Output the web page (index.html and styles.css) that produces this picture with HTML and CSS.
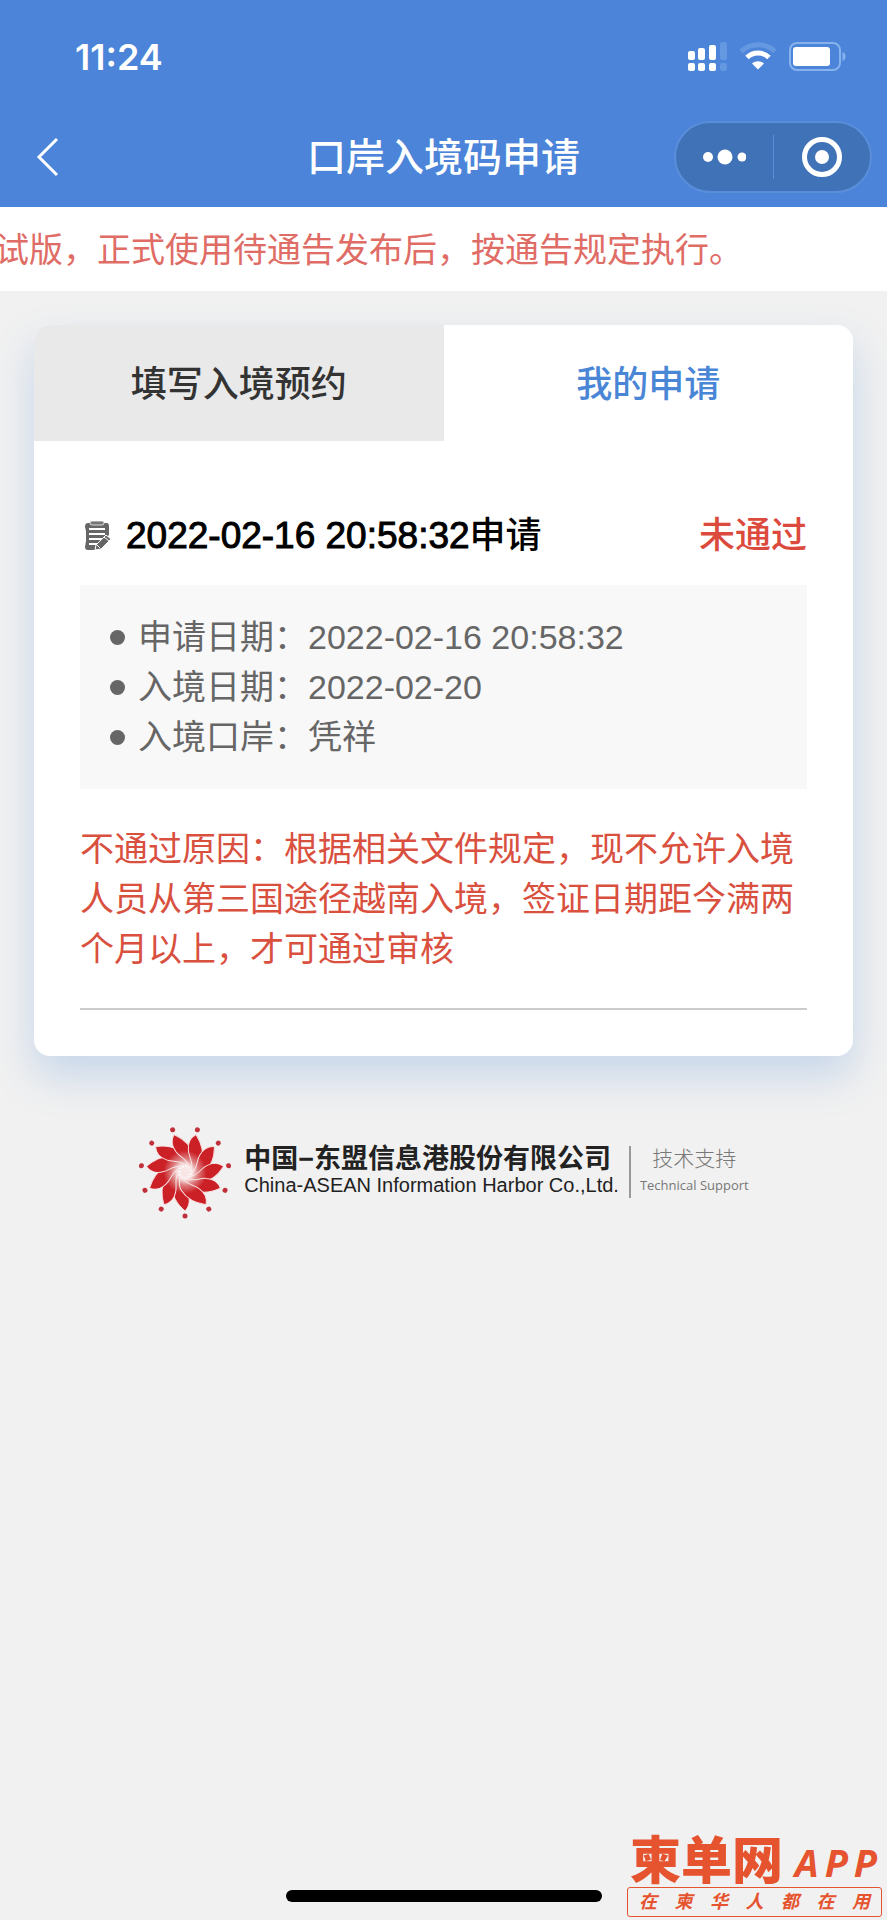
FILE: index.html
```html
<!DOCTYPE html>
<html lang="zh-CN">
<head>
    <meta charset="UTF-8">
    <meta name="viewport" content="width=device-width, initial-scale=1.0">
    <title>口岸入境码申请</title>
    <link rel="stylesheet" href="styles.css">
</head>
<body>

    <header class="header">
        <!-- Status Bar -->
        <div class="status-bar">
            <span class="time">11:24</span>
            <div class="status-icons">
                <svg width="39" height="30" viewBox="0 0 39 30" fill="#fff">
                    <rect x="0" y="9" width="7" height="9" rx="2"/>
                    <rect x="10" y="6" width="7" height="12" rx="2"/>
                    <rect x="21" y="3" width="7" height="15" rx="2"/>
                    <rect x="0" y="21" width="7" height="8" rx="2"/>
                    <rect x="10" y="21" width="7" height="8" rx="2"/>
                    <rect x="21" y="21" width="7" height="8" rx="2"/>
                    <g fill="#6499e2">
                        <rect x="32" y="0" width="7" height="18" rx="2"/>
                        <rect x="32" y="21" width="7" height="8" rx="2"/>
                    </g>
                </svg>
                <svg width="38" height="30" viewBox="0 0 38 30" fill="none">
                    <path d="M2 9.500C11.500 .5 26.500 .5 36 9.500" stroke="#6499e2" stroke-width="5"/>
                    <path d="M8 15.500C14 9.500 24 9.500 30 15.500" stroke="#fff" stroke-width="5"/>
                    <path d="M13 21.500C16.500 18.500 21.500 18.500 25 21.500L19 27.500Z" fill="#fff"/>
                </svg>
                <svg width="58" height="30" viewBox="0 0 58 30">
                    <rect x="1" y="1" width="50" height="27" rx="7" fill="none" stroke="#86b2ee" stroke-width="2"/>
                    <rect x="4" y="5" width="37" height="19" rx="3" fill="#fff"/>
                    <path d="M53.500 10C57.500 11.500 57.500 17.500 53.500 19Z" fill="#86b2ee"/>
                </svg>
            </div>
        </div>

        <!-- Navigation Bar -->
        <div class="nav-bar">
            <button type="button" class="back" aria-label="返回">
                <svg width="24" height="40" viewBox="0 0 24 40" fill="none" stroke="#fff" stroke-width="3">
                    <path d="M21 2L3 20L21 38"/>
                </svg>
            </button>
            <h1>口岸入境码申请</h1>
            <div class="capsule">
                <button type="button" aria-label="更多">
                    <svg width="44" height="16" viewBox="0 0 44 16" fill="#fff">
                        <circle cx="6" cy="8" r="5"/>
                        <circle cx="23" cy="8" r="7.500"/>
                        <circle cx="40" cy="8" r="4.500"/>
                    </svg>
                </button>
                <button type="button" aria-label="关闭">
                    <svg width="40" height="40" viewBox="0 0 40 40">
                        <circle cx="20" cy="20" r="17.500" fill="none" stroke="#fff" stroke-width="5"/>
                        <circle cx="20" cy="20" r="7" fill="#fff"/>
                    </svg>
                </button>
            </div>
        </div>
    </header>

    <div class="notice">
        <p>试版，正式使用待通告发布后，按通告规定执行。</p>
    </div>

    <main class="card">
        <nav class="tabs">
            <button type="button" class="tab">填写入境预约</button>
            <button type="button" class="tab active">我的申请</button>
        </nav>

        <section class="record">
            <div class="record-header">
                <svg width="28" height="30" viewBox="0 0 28 30">
                    <path d="M4 2H22C25 2 25 4 25 6V14L14 25L12 29H4C2 29 1 28 1 26L2 20V10L1 6C1 3 2 2 4 2Z" fill="#666"/>
                    <rect x="6" y="0" width="14" height="4" rx="2" fill="#777" stroke="#ddd"/>
                    <path d="M5 8H21M5 13H21M5 18H18M5 23H14" stroke="#fff" stroke-width="2"/>
                    <path d="M11 29L12 24L22 14L27 18L17 28Z" fill="#666" stroke="#fff"/>
                    <path d="M20 16L25 20M13 24L16 27" stroke="#fff"/>
                </svg>
                <h2><span class="stamp">2022-02-16 20:58:32</span>申请</h2>
                <span class="result">未通过</span>
            </div>

            <ul class="info">
                <li>申请日期：2022-02-16 20:58:32</li>
                <li>入境日期：2022-02-20</li>
                <li>入境口岸：凭祥</li>
            </ul>

            <p class="reason">不通过原因：根据相关文件规定，现不允许入境人员从第三国途径越南入境，签证日期距今满两个月以上，才可通过审核</p>
        </section>
    </main>

    <footer class="footer">
        <svg class="logo" width="94" height="94" viewBox="-47 -47 94 94">
            <defs>
                <radialGradient id="petalFill" gradientUnits="userSpaceOnUse" cx="0" cy="0" r="24">
                    <stop offset="0.25" stop-color="#fff"/>
                    <stop offset="0.55" stop-color="#dd7f80"/>
                    <stop offset="0.9" stop-color="#cb2026"/>
                </radialGradient>
                <g id="petal">
                    <path d="M0 0C-8 1-13 7-13 14C-13 24-8 32 0 39C5 34 5 27 3 22C1 16-5 12-5 6C-5 3-3 1 0 0Z" fill="url(#petalFill)" stroke="#f8e4e4" stroke-width="1"/>
                    <circle cx="0" cy="44" r="2.500" fill="#c0303a"/>
                </g>
            </defs>
            <use href="#petal"/>
            <use href="#petal" transform="rotate(32.727)"/>
            <use href="#petal" transform="rotate(65.455)"/>
            <use href="#petal" transform="rotate(98.182)"/>
            <use href="#petal" transform="rotate(130.909)"/>
            <use href="#petal" transform="rotate(163.636)"/>
            <use href="#petal" transform="rotate(196.364)"/>
            <use href="#petal" transform="rotate(229.091)"/>
            <use href="#petal" transform="rotate(261.818)"/>
            <use href="#petal" transform="rotate(294.545)"/>
            <use href="#petal" transform="rotate(327.273)"/>
        </svg>
        <div class="company">
            <strong>中国−东盟信息港股份有限公司</strong>
            <span>China-ASEAN Information Harbor Co.,Ltd.</span>
        </div>
        <div class="support">
            <span>技术支持</span>
            <small>Technical Support</small>
        </div>
    </footer>

    <div class="home-indicator"></div>

    <!-- Watermark over the bottom right corner -->
    <div class="watermark">
        <div class="brand">
            <b>柬单网</b>
            <i><span>A</span><span>P</span><span>P</span></i>
        </div>
        <div class="slogan">
            <span>在</span><span>柬</span><span>华</span><span>人</span><span>都</span><span>在</span><span>用</span>
        </div>
    </div>

</body>
</html>
```
FILE: styles.css
```css
* {
    box-sizing: border-box;
}

body {
    margin: 0;
    min-height: 100vh;
    display: flex;
    flex-direction: column;
    background-color: #f1f1f1;
    font-family: "Liberation Sans", "Noto Sans CJK SC", sans-serif;
    font-size: 34px;
    line-height: 50px;
    color: #000;
}

h1, h2, p, ul {
    margin: 0;
    padding: 0;
}

button {
    padding: 0;
    border: none;
    background: none;
    font-family: inherit;
    cursor: pointer;
}

svg {
    display: block;
    flex: none;
}

/* Header */
.header {
    background-color: #4b84d8;
    color: #fff;
    padding-bottom: 14px;
}

.status-bar {
    display: flex;
    justify-content: space-between;
    align-items: center;
    height: 114px;
    padding: 0 40px 0 75px;
}

.time {
    font-family: Inter, sans-serif;
    font-size: 36px;
    font-weight: 600;
}

.status-icons {
    display: flex;
    gap: 12px;
}

.nav-bar {
    display: grid;
    grid-template-columns: 1fr auto 1fr;
    align-items: center;
    margin-top: 7px;
    padding: 0 15px 0 36px;
}

.back {
    justify-self: start;
}

.nav-bar h1 {
    font-size: 39px;
    font-weight: 500;
    padding: 2px 21px 0 0;
}

.capsule {
    justify-self: end;
    display: flex;
    align-items: center;
    width: 198px;
    height: 72px;
    border: 2px solid #5a8eda;
    border-radius: 36px;
    background-color: #4072b8;
}

.capsule button {
    flex: 1;
    height: 44px;
    display: flex;
    align-items: center;
    justify-content: center;
}

.capsule button + button {
    border-left: 1px solid #5a8eda;
}

/* Scrolling notice */
.notice {
    background-color: #fff;
    color: #e06c66;
    padding: 18px 0 16px;
    overflow: hidden;
    white-space: nowrap;
}

.notice p {
    margin-left: -5px;
}

/* Card */
.card {
    margin: 34px 34px 0;
    border-radius: 16px;
    background-color: #fff;
    box-shadow: 0 20px 40px rgba(74, 134, 214, 0.25);
}

.tabs {
    display: flex;
    overflow: hidden;
    border-radius: 16px 16px 0 0;
}

.tab {
    flex: 1;
    height: 116px;
    padding-bottom: 4px;
    background-color: #e9e9e9;
    color: #333;
    font-size: 36px;
    font-weight: 500;
}

.tab.active {
    background-color: #fff;
    color: #4a86d6;
}

.record {
    padding: 70px 46px 46px;
}

.record-header {
    display: flex;
    align-items: center;
    padding-left: 4px;
}

.record-header h2 {
    margin-left: 14px;
    font-size: 36px;
    font-weight: 500;
}

.stamp {
    font-size: 37px;
    -webkit-text-stroke: 1px #000;
}

.result {
    margin-left: auto;
    color: #dc4a3d;
    font-size: 36px;
    font-weight: 500;
}

.info {
    margin-top: 24px;
    padding: 27px 30px;
    background-color: #f8f8f8;
    color: #666;
    list-style: none;
}

.info li {
    display: flex;
    align-items: center;
}

.info li::before {
    content: "";
    width: 15px;
    height: 15px;
    margin-right: 13px;
    border-radius: 50%;
    background-color: #666;
}

.reason {
    margin-top: 35px;
    padding-bottom: 34px;
    border-bottom: 2px solid #ccc;
    color: #d9503f;
}

/* Footer */
.footer {
    display: flex;
    justify-content: center;
    align-items: center;
    margin-top: 69px;
}

.company {
    display: flex;
    flex-direction: column;
    margin-left: 12px;
    padding-right: 10px;
    border-right: 2px solid #999;
    color: #222;
    font-size: 20px;
    line-height: 26px;
}

.company strong {
    font-size: 27px;
    font-weight: 700;
}

.support {
    display: flex;
    flex-direction: column;
    align-items: center;
    margin-left: 9px;
    color: #777;
    font-size: 21px;
    font-weight: 300;
    line-height: 26px;
}

.support small {
    font-family: "Open Sans", sans-serif;
    font-size: 13px;
    font-weight: 400;
}

.home-indicator {
    width: 316px;
    height: 12px;
    margin: auto auto 18px;
    border-radius: 6px;
    background-color: #000;
}

/* Watermark */
.watermark {
    position: absolute;
    right: 5px;
    bottom: 3px;
    width: 255px;
    color: #e5532f;
}

.brand {
    display: flex;
    align-items: center;
    justify-content: space-between;
    padding: 0 5px 0 3px;
}

.brand b {
    font-size: 51px;
    font-weight: 900;
}

.brand i {
    display: flex;
    gap: 6px;
    font-family: "Noto Sans", sans-serif;
    font-size: 38px;
    font-weight: 700;
}

.slogan {
    display: flex;
    justify-content: space-between;
    height: 30px;
    padding: 0 11px;
    border: 1px solid #e5532f;
    border-radius: 3px;
    font-size: 18px;
    font-style: italic;
    font-weight: 700;
    line-height: 28px;
}
```
